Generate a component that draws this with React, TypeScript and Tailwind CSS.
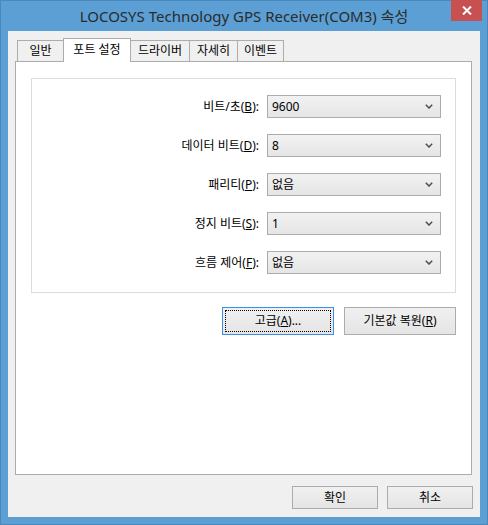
import React from 'react';

const uiFont = "font-['Noto_Sans','Noto_Sans_CJK_KR',sans-serif]";

const tabs = [
  { label: '일반', w: 'w-[47px]' },
  { label: '포트 설정', w: 'w-[68px]', active: true },
  { label: '드라이버', w: 'w-[60px]' },
  { label: '자세히', w: 'w-[49px]' },
  { label: '이벤트', w: 'w-[47px]' },
];

const rows = [
  { pre: '비트/초(', key: 'B', post: '):', value: '9600' },
  { pre: '데이터 비트(', key: 'D', post: '):', value: '8' },
  { pre: '패리티(', key: 'P', post: '):', value: '없음' },
  { pre: '정지 비트(', key: 'S', post: '):', value: '1' },
  { pre: '흐름 제어(', key: 'F', post: '):', value: '없음' },
];

const Chevron = () => (
  <svg width="8" height="5" viewBox="0 0 8 5" className="shrink-0">
    <path d="M0.8 0.8 L4 4 L7.2 0.8" fill="none" stroke="#4d4d4d" strokeWidth="1.5" />
  </svg>
);

const Select = ({ value }: { value: string }) => (
  <div className="flex h-[23px] w-[174px] items-center justify-between border border-[#acacac] bg-gradient-to-b from-[#f2f2f2] to-[#e5e5e5] pl-[4px] pr-[7px] text-[12px] text-black">
    <span>{value}</span>
    <Chevron />
  </div>
);

const Button = ({ children, className = '', primary = false }: { children: React.ReactNode; className?: string; primary?: boolean }) => (
  <div
    className={`flex items-center justify-center border bg-gradient-to-b from-[#f0f0f0] to-[#e5e5e5] text-[12px] text-black ${
      primary ? 'border-[#3c8fe6] p-[2px]' : 'border-[#acacac]'
    } ${className}`}
  >
    {primary ? (
      <div className="flex h-full w-full items-center justify-center border border-dotted border-black">{children}</div>
    ) : (
      children
    )}
  </div>
);

export default function App() {
  return (
    <div className={`flex h-[525px] w-[488px] flex-col border border-[#4b87b9] bg-[#5b9fd4] ${uiFont}`}>
      {/* title bar */}
      <div className="relative flex h-[30px] shrink-0 items-center justify-center">
        <span className="text-[15px] text-[#2b2b2b]">LOCOSYS Technology GPS Receiver(COM3) 속성</span>
        <div className="absolute right-[5px] top-[-1px] flex h-[21px] w-[31px] items-center justify-center bg-[#c75050]">
          <svg width="10" height="9" viewBox="0 0 10 9">
            <path d="M1 0.5 L9 8.5 M9 0.5 L1 8.5" stroke="#fff" strokeWidth="2" />
          </svg>
        </div>
      </div>

      {/* client area */}
      <div className="mx-[7px] mb-[7px] flex flex-1 flex-col bg-[#f0f0f0] px-[7px] pt-[7px]">
        <div className="flex h-[23px] items-end pl-[2px]">
          {tabs.map((t, i) =>
            t.active ? (
              <div
                key={t.label}
                className={`relative z-10 -mb-px -ml-px flex h-[24px] ${t.w} items-start justify-center border border-b-0 border-[#acacac] bg-white pt-[2px] text-[12px] text-black`}
              >
                {t.label}
              </div>
            ) : (
              <div
                key={t.label}
                className={`flex h-[21px] ${t.w} ${i > 0 ? '-ml-px' : ''} items-center justify-center border border-b-0 border-[#acacac] bg-[#f0f0f0] text-[12px] text-black`}
              >
                {t.label}
              </div>
            )
          )}
        </div>

        <div className="flex h-[414px] w-[457px] flex-col border border-[#acacac] bg-white px-[15px] pt-[16px]">
          <div className="flex flex-col gap-[16px] border border-[#dcdcdc] pb-[18px] pr-[14px] pt-[16px]">
            {rows.map((r) => (
              <div key={r.key} className="flex items-center justify-end gap-[8px]">
                <span className="text-[12px] text-black">
                  {r.pre}
                  <span className="underline">{r.key}</span>
                  {r.post}
                </span>
                <Select value={r.value} />
              </div>
            ))}
          </div>
          <div className="mt-[14px] flex justify-end gap-[10px]">
            <Button primary className="h-[28px] w-[112px]">
              <span>
                고급(<span className="underline">A</span>)...
              </span>
            </Button>
            <Button className="h-[28px] w-[112px]">
              <span>
                기본값 복원(<span className="underline">R</span>)
              </span>
            </Button>
          </div>
        </div>

        <div className="mt-[11px] flex justify-end gap-[9px]">
          <Button className="h-[23px] w-[86px]">확인</Button>
          <Button className="h-[23px] w-[86px]">취소</Button>
        </div>
      </div>
    </div>
  );
}
